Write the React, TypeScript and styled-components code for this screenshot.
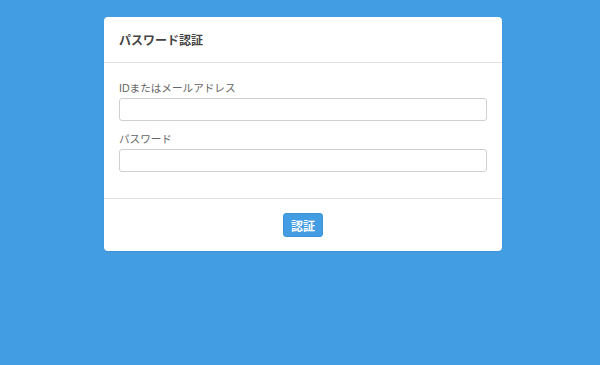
import React from 'react';
import styled, { createGlobalStyle } from 'styled-components';

const GlobalStyle = createGlobalStyle`
  html, body {
    margin: 0;
    padding: 0;
    background: #439de3;
    font-family: "Liberation Sans", "Noto Sans CJK JP", sans-serif;
    color: #555;
  }
`;

const Page = styled.div({
  width: '600px',
  height: '365px',
  display: 'flex',
  justifyContent: 'center',
  alignItems: 'flex-start',
  padding: '17px 0 0 6px',
  boxSizing: 'border-box',
});

const Card = styled.div({
  width: '398px',
  background: '#fff',
  borderRadius: '4px',
  boxShadow: '0 1px 1px rgba(0, 0, 0, 0.08)',
});

const Header = styled.div({
  height: '45px',
  padding: '0 15px',
  display: 'flex',
  alignItems: 'center',
  borderBottom: '1px solid #e3e3e3',
});

const Title = styled.h1({
  margin: 0,
  fontSize: '12px',
  fontWeight: 'bold',
  color: '#444',
});

const Body = styled.div({
  padding: '15px 15px 26px',
  borderBottom: '1px solid #e3e3e3',
});

const Group = styled.div`
  & + & {
    margin-top: 8px;
  }
`;

const Label = styled.label({
  display: 'block',
  fontSize: '10.6px',
  lineHeight: '20px',
  color: '#666',
});

const Input = styled.input({
  display: 'block',
  width: '100%',
  height: '23px',
  boxSizing: 'border-box',
  border: '1px solid #cfcfcf',
  borderRadius: '3px',
  background: '#fff',
  outline: 'none',
});

const Footer = styled.div({
  height: '52px',
  display: 'flex',
  justifyContent: 'center',
  alignItems: 'center',
});

const Button = styled.button({
  height: '24px',
  padding: '0 7px',
  border: '1px solid #3a93d8',
  borderRadius: '3px',
  background: '#439de3',
  color: '#fff',
  fontSize: '12px',
  fontWeight: 'bold',
  fontFamily: 'inherit',
  cursor: 'pointer',
});

export default function App() {
  return (
    <>
      <GlobalStyle />
      <Page>
        <Card>
          <Header>
            <Title>パスワード認証</Title>
          </Header>
          <Body>
            <Group>
              <Label>IDまたはメールアドレス</Label>
              <Input type="text" />
            </Group>
            <Group>
              <Label>パスワード</Label>
              <Input type="password" />
            </Group>
          </Body>
          <Footer>
            <Button type="button">認証</Button>
          </Footer>
        </Card>
      </Page>
    </>
  );
}
